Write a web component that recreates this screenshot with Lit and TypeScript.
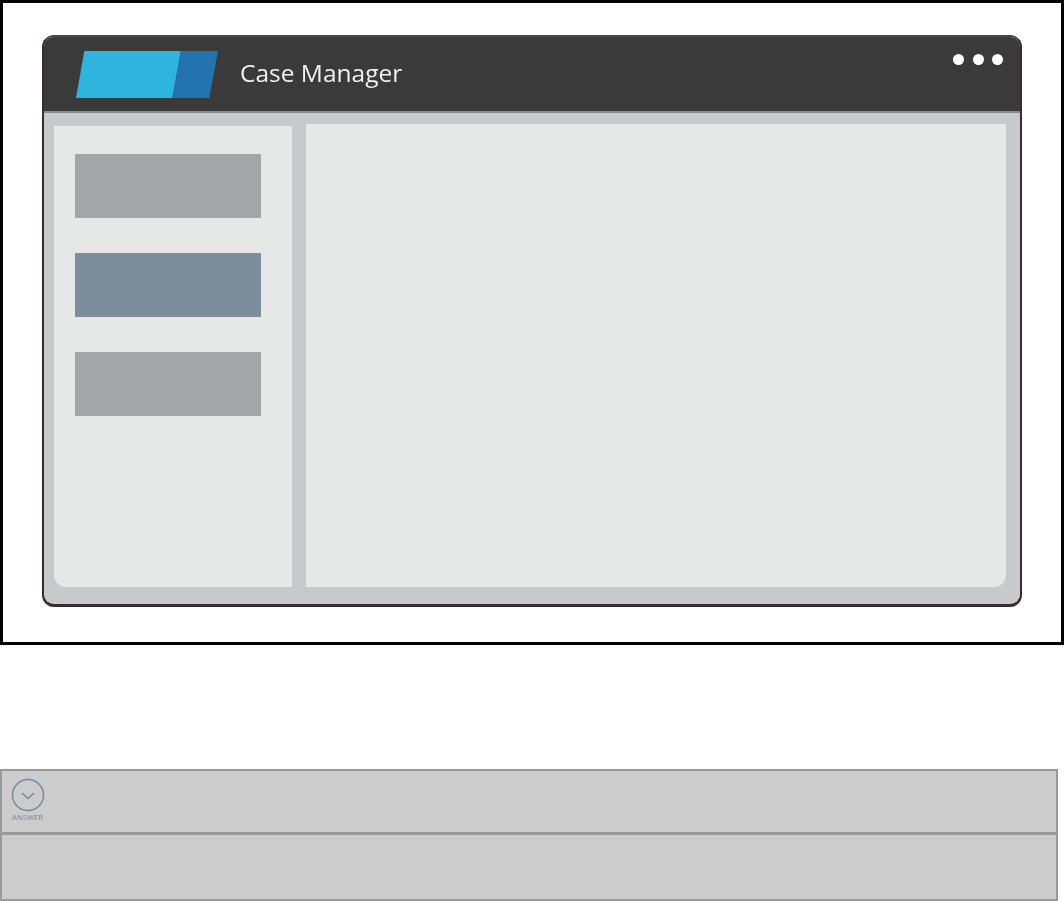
import { LitElement, html, css } from 'lit';
import { customElement } from 'lit/decorators.js';

@customElement('app-root')
export class AppRoot extends LitElement {
  static styles = css`
    :host {
      display: block;
      width: 1064px;
      height: 901px;
      background: #fff;
      font-family: 'Open Sans', sans-serif;
      overflow: hidden;
    }

    .frame {
      box-sizing: border-box;
      width: 1064px;
      height: 645px;
      border: 3px solid #000;
      padding: 32px 39px 0 38.5px;
    }

    /* the reference is an upscaled raster, so everything in it is a bit soft */
    .window {
      box-sizing: border-box;
      height: 571.5px;
      border: 2px solid #3a2c2e;
      border-top-color: #4a4444;
      border-bottom-width: 3px;
      border-radius: 12px;
      background: #c8c9cb;
      overflow: hidden;
      display: flex;
      flex-direction: column;
      filter: blur(0.5px);
    }

    .titlebar {
      flex: none;
      height: 74px;
      background: #3a3a3a;
      border-bottom: 2px solid #8a8a8a;
      display: flex;
      align-items: flex-start;
      padding: 0 17px 0 32.5px;
    }

    .logo {
      margin-top: 13.5px;
      flex: none;
    }

    .title {
      margin: 19.5px 0 0 22px;
      font-size: 24.5px;
      line-height: 32px;
      color: #f1f1f1;
    }

    .dots {
      margin-left: auto;
      margin-top: 17px;
      display: flex;
      gap: 8.5px;
    }

    .dots span {
      width: 11px;
      height: 11px;
      border-radius: 50%;
      background: #fff;
    }

    .body {
      flex: 1;
      min-height: 0;
      display: flex;
      align-items: stretch;
      padding: 11px 14px 16.5px 10px;
      gap: 14px;
    }

    .sidebar {
      flex: none;
      box-sizing: border-box;
      width: 238px;
      margin-top: 2px;
      background: #e6e7e7;
      border-bottom-left-radius: 12px;
      padding: 28px 31px 0 21px;
      display: flex;
      flex-direction: column;
      gap: 35px;
    }

    .item {
      height: 64px;
      background: #a3a6a6;
    }

    .item.active {
      background: #7c8e9c;
    }

    .main {
      flex: 1;
      background: #e6e7e7;
      border-bottom-right-radius: 12px;
    }

    .panels {
      box-sizing: border-box;
      width: 1058px;
      margin-top: 124px;
      border: 2px solid #999;
      background: #ccc;
    }

    .panel {
      box-sizing: border-box;
      height: 61px;
      padding: 6.5px 0 0 7.5px;
    }

    .panel + .panel {
      height: 67px;
      border-top: 3px solid #999;
    }

    .answer {
      width: 36px;
      display: flex;
      flex-direction: column;
      align-items: center;
      gap: 1.5px;
      color: #8496a5;
      filter: blur(0.4px);
    }

    .answer svg {
      display: block;
    }

    .answer span {
      font-size: 7.5px;
      line-height: 8px;
      font-weight: 600;
      white-space: nowrap;
    }
  `;

  render() {
    return html`
      <div class="frame">
        <div class="window">
          <div class="titlebar">
            <svg class="logo" width="142" height="47" viewBox="0 0 142 47">
              <polygon points="8.3,0 105,0 96.5,47 0,47" fill="#2fb4de"></polygon>
              <polygon points="104.7,0 142,0 133.3,47 96.3,47" fill="#2273ae"></polygon>
            </svg>
            <div class="title">Case Manager</div>
            <div class="dots"><span></span><span></span><span></span></div>
          </div>
          <div class="body">
            <div class="sidebar">
              <div class="item"></div>
              <div class="item active"></div>
              <div class="item"></div>
            </div>
            <div class="main"></div>
          </div>
        </div>
      </div>
      <div class="panels">
        <div class="panel">
          <div class="answer">
            <svg width="34" height="34" viewBox="0 0 34 34" fill="none" stroke="#748a9b" stroke-width="1.5">
              <circle cx="17" cy="17" r="15.5"></circle>
              <path d="M11 15 L17 20.5 L23 15" stroke-width="1.6"></path>
            </svg>
            <span>ANSWER</span>
          </div>
        </div>
        <div class="panel"></div>
      </div>
    `;
  }
}
